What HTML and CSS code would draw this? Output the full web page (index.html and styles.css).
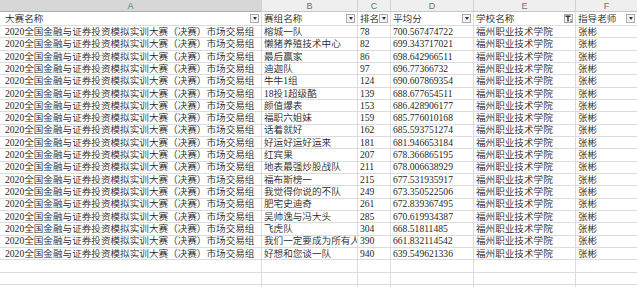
FILE: index.html
```html
<!DOCTYPE html>
<html lang="zh">
<head>
<meta charset="utf-8">
<link rel="stylesheet" href="styles.css">
</head>
<body>
<div class="sheet">
  <div class="ch sel">A</div><div class="ch">B</div><div class="ch">C</div><div class="ch">D</div><div class="ch">E</div><div class="ch">F</div>

  <div class="c h a">大赛名称<span class="fb"></span></div>
  <div class="c h">赛组名称<span class="fb"></span></div>
  <div class="c h">排名<span class="fb"></span></div>
  <div class="c h">平均分<span class="fb"></span></div>
  <div class="c h">学校名称<span class="fb on"><svg viewBox="0 0 9 9" width="9" height="9"><path d="M1.5 1.5H6.5V3H4.7V7.5H3.3V3H1.5Z" fill="#333"/><path d="M6.3 5.5H8V6.3H6.3ZM6.3 7H8V7.8H6.3Z" fill="#555"/></svg></span></div>
  <div class="c h">指导老师<span class="fb"></span></div>

  <div class="c a">2020全国金融与证券投资模拟实训大赛（决赛）市场交易组</div><div class="c">榕城一队</div><div class="c">78</div><div class="c">700.567474722</div><div class="c">福州职业技术学院</div><div class="c">张彬</div>
  <div class="c a">2020全国金融与证券投资模拟实训大赛（决赛）市场交易组</div><div class="c">懒猪养殖技术中心</div><div class="c">82</div><div class="c">699.343717021</div><div class="c">福州职业技术学院</div><div class="c">张彬</div>
  <div class="c a">2020全国金融与证券投资模拟实训大赛（决赛）市场交易组</div><div class="c">最后赢家</div><div class="c">86</div><div class="c">698.642966511</div><div class="c">福州职业技术学院</div><div class="c">张彬</div>
  <div class="c a">2020全国金融与证券投资模拟实训大赛（决赛）市场交易组</div><div class="c">迪迦队</div><div class="c">97</div><div class="c">696.77366732</div><div class="c">福州职业技术学院</div><div class="c">张彬</div>
  <div class="c a">2020全国金融与证券投资模拟实训大赛（决赛）市场交易组</div><div class="c">牛牛1组</div><div class="c">124</div><div class="c">690.607869354</div><div class="c">福州职业技术学院</div><div class="c">张彬</div>
  <div class="c a">2020全国金融与证券投资模拟实训大赛（决赛）市场交易组</div><div class="c">18投1超级酷</div><div class="c">139</div><div class="c">688.677654511</div><div class="c">福州职业技术学院</div><div class="c">张彬</div>
  <div class="c a">2020全国金融与证券投资模拟实训大赛（决赛）市场交易组</div><div class="c">颜值爆表</div><div class="c">153</div><div class="c">686.428906177</div><div class="c">福州职业技术学院</div><div class="c">张彬</div>
  <div class="c a">2020全国金融与证券投资模拟实训大赛（决赛）市场交易组</div><div class="c">福职六姐妹</div><div class="c">159</div><div class="c">685.776010168</div><div class="c">福州职业技术学院</div><div class="c">张彬</div>
  <div class="c a">2020全国金融与证券投资模拟实训大赛（决赛）市场交易组</div><div class="c">话着就好</div><div class="c">162</div><div class="c">685.593751274</div><div class="c">福州职业技术学院</div><div class="c">张彬</div>
  <div class="c a">2020全国金融与证券投资模拟实训大赛（决赛）市场交易组</div><div class="c">好运好运好运来</div><div class="c">181</div><div class="c">681.946653184</div><div class="c">福州职业技术学院</div><div class="c">张彬</div>
  <div class="c a">2020全国金融与证券投资模拟实训大赛（决赛）市场交易组</div><div class="c">红宾果</div><div class="c">207</div><div class="c">678.366865195</div><div class="c">福州职业技术学院</div><div class="c">张彬</div>
  <div class="c a">2020全国金融与证券投资模拟实训大赛（决赛）市场交易组</div><div class="c">地表最强炒股战队</div><div class="c">211</div><div class="c">678.006638929</div><div class="c">福州职业技术学院</div><div class="c">张彬</div>
  <div class="c a">2020全国金融与证券投资模拟实训大赛（决赛）市场交易组</div><div class="c">福布斯榜一</div><div class="c">215</div><div class="c">677.531935917</div><div class="c">福州职业技术学院</div><div class="c">张彬</div>
  <div class="c a">2020全国金融与证券投资模拟实训大赛（决赛）市场交易组</div><div class="c">我觉得你说的不队</div><div class="c">249</div><div class="c">673.350522506</div><div class="c">福州职业技术学院</div><div class="c">张彬</div>
  <div class="c a">2020全国金融与证券投资模拟实训大赛（决赛）市场交易组</div><div class="c">肥宅史迪奇</div><div class="c">261</div><div class="c">672.839367495</div><div class="c">福州职业技术学院</div><div class="c">张彬</div>
  <div class="c a">2020全国金融与证券投资模拟实训大赛（决赛）市场交易组</div><div class="c">吴帅逸与冯大头</div><div class="c">285</div><div class="c">670.619934387</div><div class="c">福州职业技术学院</div><div class="c">张彬</div>
  <div class="c a">2020全国金融与证券投资模拟实训大赛（决赛）市场交易组</div><div class="c">飞虎队</div><div class="c">304</div><div class="c">668.51811485</div><div class="c">福州职业技术学院</div><div class="c">张彬</div>
  <div class="c a">2020全国金融与证券投资模拟实训大赛（决赛）市场交易组</div><div class="c"><span class="clip">我们一定要成为所有人</span></div><div class="c">390</div><div class="c">661.832114542</div><div class="c">福州职业技术学院</div><div class="c">张彬</div>
  <div class="c a">2020全国金融与证券投资模拟实训大赛（决赛）市场交易组</div><div class="c">好想和您谈一队</div><div class="c">940</div><div class="c">639.549621336</div><div class="c">福州职业技术学院</div><div class="c">张彬</div>

  <div class="c a"></div><div class="c"></div><div class="c"></div><div class="c"></div><div class="c"></div><div class="c"></div>
  <div class="c a"></div><div class="c"></div><div class="c"></div><div class="c"></div><div class="c"></div><div class="c"></div>
  <div class="c a"></div><div class="c"></div><div class="c"></div><div class="c"></div><div class="c"></div><div class="c"></div>
</div>
</body>
</html>
```
FILE: styles.css
```css
html, body {
  margin: 0;
  padding: 0;
  background: #ffffff;
  overflow: hidden;
}

.sheet {
  display: grid;
  grid-template-columns: 262px 96px 33px 83px 102px 62px;
  grid-template-rows: 12px 14px repeat(22, 12.33px);
  width: 637px;
  height: 287px;
  overflow: hidden;
  font-family: "Liberation Serif", "Noto Sans CJK SC", serif;
  font-size: 9.6px;
  font-weight: 350;
  color: #1f1f1f;
}

.ch {
  box-sizing: border-box;
  background: #efefef;
  border-right: 1px solid #d2d2d2;
  border-bottom: 1px solid #c6c6c6;
  font-family: "Liberation Sans", sans-serif;
  font-size: 9px;
  font-weight: 400;
  color: #707070;
  display: flex;
  align-items: center;
  justify-content: center;
}

.ch.sel {
  background: #d7d7d7;
  color: #3d8a5c;
  border-bottom: 1px solid #9fb8a8;
}

.c {
  box-sizing: border-box;
  border-right: 1px solid #dcdcdc;
  border-bottom: 1px solid #dcdcdc;
  padding-left: 2px;
  display: flex;
  align-items: center;
  white-space: nowrap;
  overflow: hidden;
  line-height: 1;
  min-width: 0;
}

.c.a {
  padding-left: 5px;
}

.h {
  padding-right: 2px;
}

.clip {
  display: block;
  min-width: 0;
  max-width: 100%;
  overflow: hidden;
  white-space: nowrap;
}

.fb {
  flex: none;
  box-sizing: border-box;
  width: 9px;
  height: 9px;
  margin-left: auto;
  border: 1px solid #a9a9a9;
  background: #f4f4f4;
  display: flex;
  align-items: center;
  justify-content: center;
}

.fb::after {
  content: "";
  width: 0;
  height: 0;
  border-left: 2.5px solid transparent;
  border-right: 2.5px solid transparent;
  border-top: 3px solid #333333;
}

.fb.on::after {
  display: none;
}

.fb.on svg {
  display: block;
  margin: -1px;
}
```
